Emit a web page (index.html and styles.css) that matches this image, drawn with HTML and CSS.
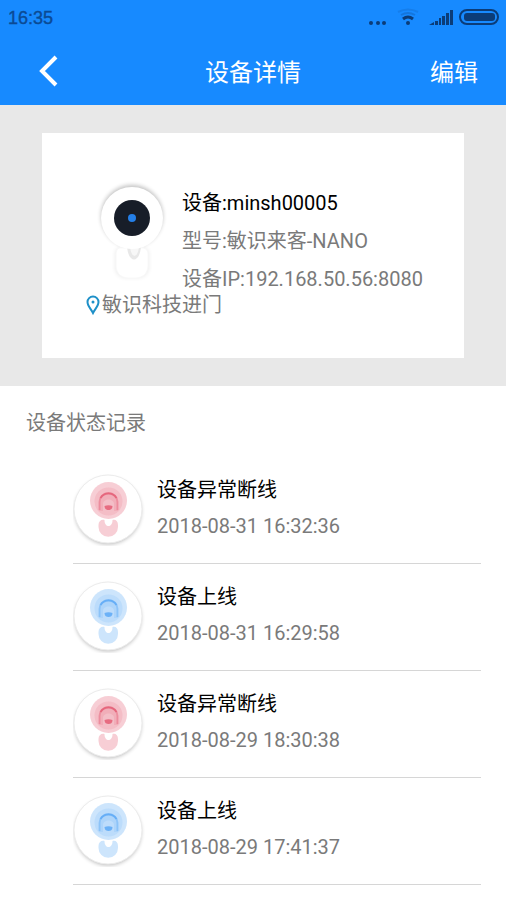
FILE: index.html
```
<!DOCTYPE html>
<html lang="zh-CN">
<head>
    <meta charset="UTF-8">
    <meta name="viewport" content="width=device-width, initial-scale=1.0">
    <title>设备详情</title>
    <link rel="stylesheet" href="styles.css">
</head>
<body>
    <!-- shared drawings -->
    <svg class="defs" width="0" height="0" aria-hidden="true">
        <defs>
            <filter id="soft" x="-30%" y="-30%" width="160%" height="160%">
                <feGaussianBlur stdDeviation="2"/>
            </filter>
            <symbol id="camera-status" viewBox="0 0 72 72">
                <circle cx="35" cy="37" r="33" fill="#000" opacity=".3" filter="url(#soft)"/>
                <circle cx="35" cy="35" r="34" fill="#fff" stroke="#ececec"/>
                <path d="M25.500 51c0-4 3-6 6-5 0 8 8 8 8 0 3-1 5.500 1 5.500 5v2a9.700 9.700 0 0 1-19.500 0z" fill="currentColor" opacity=".26"/>
                <circle cx="35.500" cy="26.500" r="18.500" fill="currentColor" opacity=".26"/>
                <circle cx="35.500" cy="27.500" r="14" fill="currentColor" opacity=".12"/>
                <path d="M26 37v-9a9.500 9.500 0 0 1 19 0v9z" fill="currentColor" opacity=".12"/>
                <path d="M26.500 36v-8a9 9 0 0 1 18 0v8" fill="none" stroke="currentColor" stroke-width="2" opacity=".3"/>
                <path d="M27.500 24a9.500 9.500 0 0 1 16 0" fill="none" stroke="currentColor" stroke-width="2" opacity=".5"/>
                <path d="M30 30c0-6 11-6 11 0v7H30z" fill="#fff" opacity=".2"/>
                <path d="M31.500 32q4-1.500 8 0c0 3-2 4-4 4s-4-1-4-4z" fill="currentColor" opacity=".65"/>
            </symbol>
        </defs>
    </svg>

    <header class="header">
        <div class="status-bar">
            <span class="clock">16:35</span>
            <svg class="status-icons" width="132" height="20" viewBox="0 0 132 20" aria-hidden="true">
                <g fill="#0b3c78">
                    <circle cx="3" cy="15" r="2"/>
                    <circle cx="10" cy="15" r="2"/>
                    <circle cx="16" cy="15" r="2"/>
                    <circle cx="40" cy="15" r="2"/>
                    <path d="M61 17l5-3v3zM67 13h3v4h-3zM71 10h2v7h-2zM74 8h3v9h-3zM78 5h3v12h-3zM82 2h3v15h-3z"/>
                    <rect x="96" y="5" width="31" height="8" rx="3"/>
                </g>
                <g fill="none" stroke="#0b3c78" stroke-width="2">
                    <path d="M35 11q5-4 10 0" stroke-width="3"/>
                    <path d="M33 7q7-4 14 0" opacity=".25"/>
                    <path d="M30 4q10-5 20 0" opacity=".15"/>
                    <rect x="92" y="2" width="38" height="14" rx="7"/>
                </g>
            </svg>
        </div>
        <nav class="nav">
            <button class="back" aria-label="返回">
                <svg width="20" height="32" viewBox="0 0 20 32">
                    <path d="M18 2L4 16l14 14" fill="none" stroke="#fff" stroke-width="4"/>
                </svg>
            </button>
            <h1>设备详情</h1>
            <button class="edit">编辑</button>
        </nav>
    </header>

    <section class="device">
        <div class="card">
            <div class="card-main">
                <svg class="camera" width="92" height="110" viewBox="0 0 92 110" aria-hidden="true">
                    <circle cx="46" cy="34" r="31" fill="#000" opacity=".24" filter="url(#soft)"/>
                    <path d="M29 72c0-5 3-7 7-6h20c4-1 7 2 7 6v13c0 7-5 11-12 11H41c-7 0-12-4-12-11z" fill="#000" opacity=".07" filter="url(#soft)"/>
                    <path d="M30 72c0-5 3-7 7-6h18c4-1 7 2 7 6v12c0 7-5 12-12 12H42c-7 0-12-5-12-12z" fill="#fff" stroke="#f8f8f8"/>
                    <path d="M41 64c1 18 13 18 14 0z" fill="#e8e8e8"/>
                    <path d="M44 64c1 13 8 13 9 0z" fill="#f7f7f7"/>
                    <circle cx="46" cy="36" r="31" fill="#fff"/>
                    <circle cx="46" cy="36" r="18" fill="#171d28"/>
                    <circle cx="46" cy="36" r="4" fill="#247fe8"/>
                </svg>
                <div class="info">
                    <p class="name">设备:minsh00005</p>
                    <p>型号:敏识来客-NANO</p>
                    <p>设备IP:192.168.50.56:8080</p>
                </div>
            </div>
            <p class="location">
                <svg width="14" height="20" viewBox="0 0 14 20" aria-hidden="true">
                    <path d="M7 18C5 14 1.500 11 1.500 7a5.500 5.500 0 0 1 11 0c0 4-3.500 7-5.500 11z" fill="none" stroke="#1e90c8" stroke-width="2"/>
                    <circle cx="7" cy="7" r="1.500" fill="#1e90c8"/>
                </svg>
                敏识科技进门
            </p>
        </div>
    </section>

    <main class="records">
        <h2>设备状态记录</h2>
        <ul>
            <li>
                <svg class="state offline" width="72" height="72"><use href="#camera-status"/></svg>
                <div class="record">
                    <h3>设备异常断线</h3>
                    <time>2018-08-31 16:32:36</time>
                </div>
            </li>
            <li>
                <svg class="state online" width="72" height="72"><use href="#camera-status"/></svg>
                <div class="record">
                    <h3>设备上线</h3>
                    <time>2018-08-31 16:29:58</time>
                </div>
            </li>
            <li>
                <svg class="state offline" width="72" height="72"><use href="#camera-status"/></svg>
                <div class="record">
                    <h3>设备异常断线</h3>
                    <time>2018-08-29 18:30:38</time>
                </div>
            </li>
            <li>
                <svg class="state online" width="72" height="72"><use href="#camera-status"/></svg>
                <div class="record">
                    <h3>设备上线</h3>
                    <time>2018-08-29 17:41:37</time>
                </div>
            </li>
        </ul>
    </main>
</body>
</html>
```
FILE: styles.css
```
* {
    box-sizing: border-box;
}

body {
    margin: 0;
    background-color: #fff;
    color: #7a7a7a;
    font-family: Roboto, "Noto Sans CJK SC", sans-serif;
    font-size: 20px;
    line-height: 26px;
}

h1, h2, h3, p, ul {
    margin: 0;
    padding: 0;
    font-size: 20px;
    font-weight: normal;
}

svg {
    display: block;
    flex-shrink: 0;
}

.defs {
    position: absolute;
}

button {
    border: none;
    padding: 0;
    background: none;
    color: #fff;
    font-family: inherit;
    font-size: 24px;
    cursor: pointer;
}

/* header */
.header {
    background-color: #178aff;
    color: #fff;
}

.status-bar {
    display: flex;
    justify-content: space-between;
    align-items: center;
    height: 36px;
    padding: 0 6px 0 8px;
}

.clock {
    color: #0b4a94;
    font-family: "Liberation Sans", Arial, sans-serif;
    font-size: 18px;
    -webkit-text-stroke: 0.4px #0b4a94;
}

.nav {
    display: grid;
    grid-template-columns: 1fr auto 1fr;
    align-items: center;
    height: 69px;
    padding: 0 28px;
}

.nav h1 {
    font-size: 24px;
    line-height: normal;
}

.back {
    justify-self: start;
    padding: 0 10px;
}

.edit {
    justify-self: end;
}

/* device card */
.device {
    padding: 28px 42px;
    background-color: #e8e8e8;
}

.card {
    padding: 49px 20px 40px 44px;
    background-color: #fff;
}

.card-main {
    display: flex;
    align-items: flex-end;
    gap: 4px;
}

.camera {
    overflow: visible;
}

.info {
    display: flex;
    flex-direction: column;
    gap: 12px;
}

.info .name {
    color: #000;
}

.location {
    display: flex;
    align-items: center;
    gap: 2px;
}

/* records */
.records h2 {
    padding: 24px 26px 21px;
}

.records ul {
    padding: 0 25px 0 73px;
    list-style: none;
}

.records li {
    display: flex;
    gap: 12px;
    padding: 17px 0;
    border-bottom: 1px solid #d6d6d6;
}

.state {
    overflow: visible;
}

.offline {
    color: #e0405c;
}

.online {
    color: #3f9af5;
}

.record {
    display: flex;
    flex-direction: column;
    gap: 10px;
    padding-top: 3px;
}

.record h3 {
    color: #000;
}
```
